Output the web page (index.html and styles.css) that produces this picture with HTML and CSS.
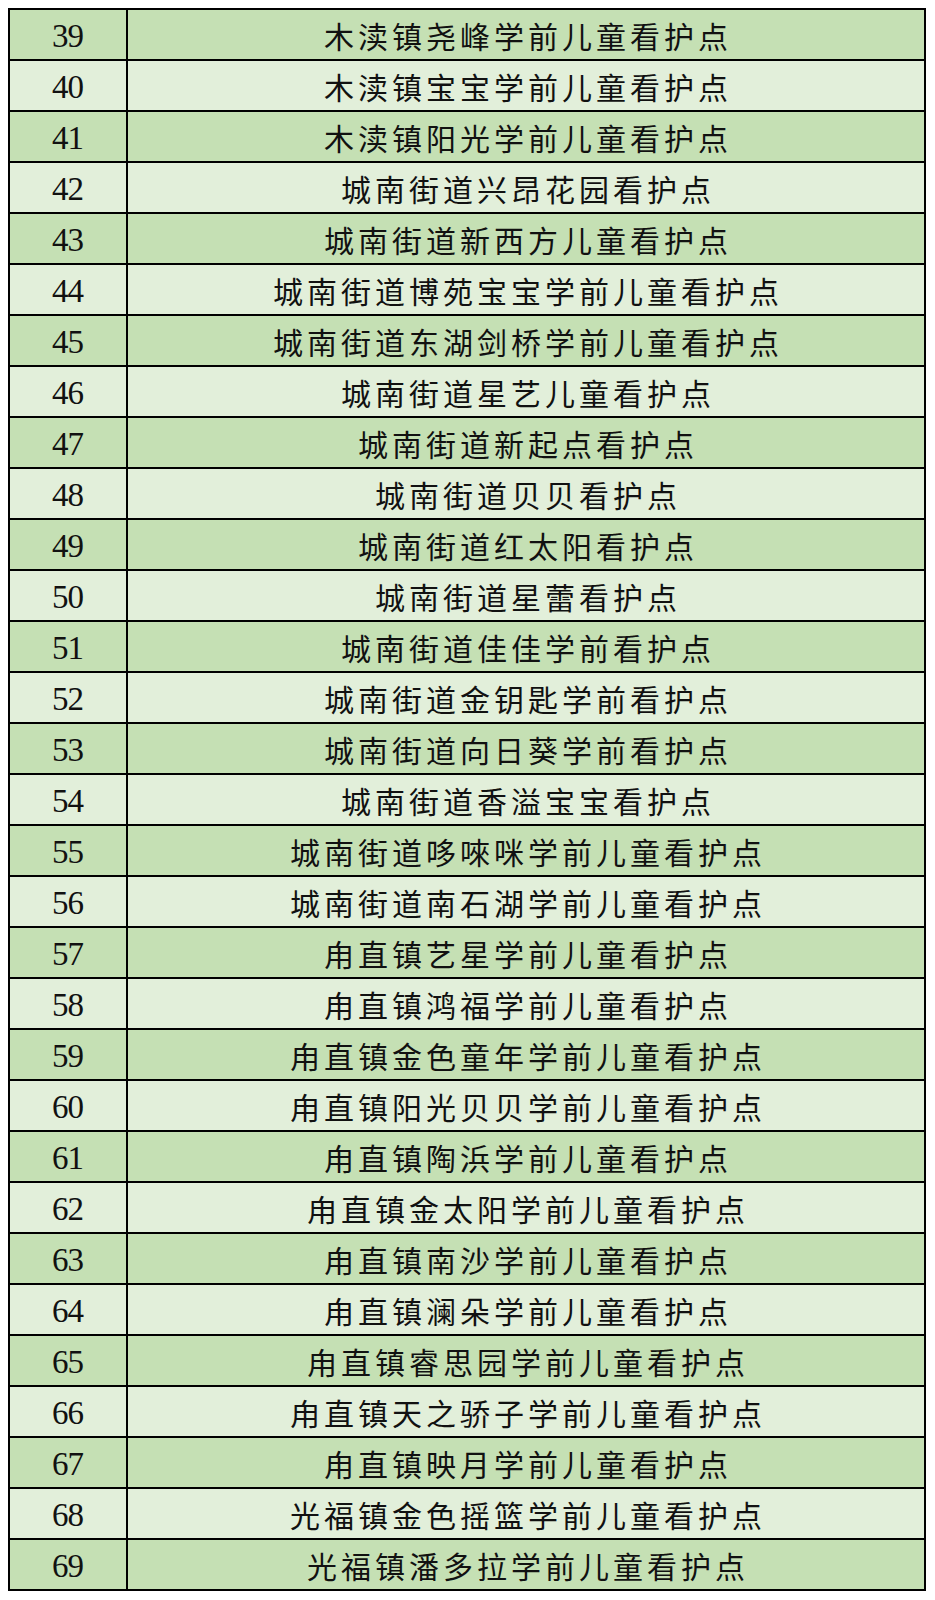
FILE: index.html
```html
<!DOCTYPE html>
<html lang="zh">
<head>
<meta charset="utf-8">
<title>看护点名单</title>
<link rel="stylesheet" href="styles.css">
</head>
<body>
<div class="sheet">
  <div class="row dark"><div class="num">39</div><div class="name">木渎镇尧峰学前儿童看护点</div></div>
  <div class="row light"><div class="num">40</div><div class="name">木渎镇宝宝学前儿童看护点</div></div>
  <div class="row dark"><div class="num">41</div><div class="name">木渎镇阳光学前儿童看护点</div></div>
  <div class="row light"><div class="num">42</div><div class="name">城南街道兴昂花园看护点</div></div>
  <div class="row dark"><div class="num">43</div><div class="name">城南街道新西方儿童看护点</div></div>
  <div class="row light"><div class="num">44</div><div class="name">城南街道博苑宝宝学前儿童看护点</div></div>
  <div class="row dark"><div class="num">45</div><div class="name">城南街道东湖剑桥学前儿童看护点</div></div>
  <div class="row light"><div class="num">46</div><div class="name">城南街道星艺儿童看护点</div></div>
  <div class="row dark"><div class="num">47</div><div class="name">城南街道新起点看护点</div></div>
  <div class="row light"><div class="num">48</div><div class="name">城南街道贝贝看护点</div></div>
  <div class="row dark"><div class="num">49</div><div class="name">城南街道红太阳看护点</div></div>
  <div class="row light"><div class="num">50</div><div class="name">城南街道星蕾看护点</div></div>
  <div class="row dark"><div class="num">51</div><div class="name">城南街道佳佳学前看护点</div></div>
  <div class="row light"><div class="num">52</div><div class="name">城南街道金钥匙学前看护点</div></div>
  <div class="row dark"><div class="num">53</div><div class="name">城南街道向日葵学前看护点</div></div>
  <div class="row light"><div class="num">54</div><div class="name">城南街道香溢宝宝看护点</div></div>
  <div class="row dark"><div class="num">55</div><div class="name">城南街道哆唻咪学前儿童看护点</div></div>
  <div class="row light"><div class="num">56</div><div class="name">城南街道南石湖学前儿童看护点</div></div>
  <div class="row dark"><div class="num">57</div><div class="name">甪直镇艺星学前儿童看护点</div></div>
  <div class="row light"><div class="num">58</div><div class="name">甪直镇鸿福学前儿童看护点</div></div>
  <div class="row dark"><div class="num">59</div><div class="name">甪直镇金色童年学前儿童看护点</div></div>
  <div class="row light"><div class="num">60</div><div class="name">甪直镇阳光贝贝学前儿童看护点</div></div>
  <div class="row dark"><div class="num">61</div><div class="name">甪直镇陶浜学前儿童看护点</div></div>
  <div class="row light"><div class="num">62</div><div class="name">甪直镇金太阳学前儿童看护点</div></div>
  <div class="row dark"><div class="num">63</div><div class="name">甪直镇南沙学前儿童看护点</div></div>
  <div class="row light"><div class="num">64</div><div class="name">甪直镇澜朵学前儿童看护点</div></div>
  <div class="row dark"><div class="num">65</div><div class="name">甪直镇睿思园学前儿童看护点</div></div>
  <div class="row light"><div class="num">66</div><div class="name">甪直镇天之骄子学前儿童看护点</div></div>
  <div class="row dark"><div class="num">67</div><div class="name">甪直镇映月学前儿童看护点</div></div>
  <div class="row light"><div class="num">68</div><div class="name">光福镇金色摇篮学前儿童看护点</div></div>
  <div class="row dark"><div class="num">69</div><div class="name">光福镇潘多拉学前儿童看护点</div></div>
</div>
</body>
</html>
```
FILE: styles.css
```css
html, body {
  background: #ffffff;
}
body {
  margin: 8px;
}
.sheet {
  width: 918px;
  border-top: 2px solid #000;
  border-left: 2px solid #000;
  box-sizing: border-box;
}
.row {
  display: grid;
  grid-template-columns: 118px 798px;
  height: 51px;
}
.row.dark { background: #c5e0b4; }
.row.light { background: #e2efda; }
.num, .name {
  border-right: 2px solid #000;
  border-bottom: 2px solid #000;
  display: flex;
  align-items: center;
  justify-content: center;
  color: #111;
}
.num {
  font-family: "Liberation Serif", "Times New Roman", serif;
  font-size: 33px;
  letter-spacing: -1px;
  padding-top: 3px;
  padding-right: 1px;
}
.name {
  font-family: "Liberation Serif", "Noto Sans CJK SC", serif;
  font-size: 30px;
  letter-spacing: 4px;
  padding-left: 4px;
  padding-top: 1px;
}
```
